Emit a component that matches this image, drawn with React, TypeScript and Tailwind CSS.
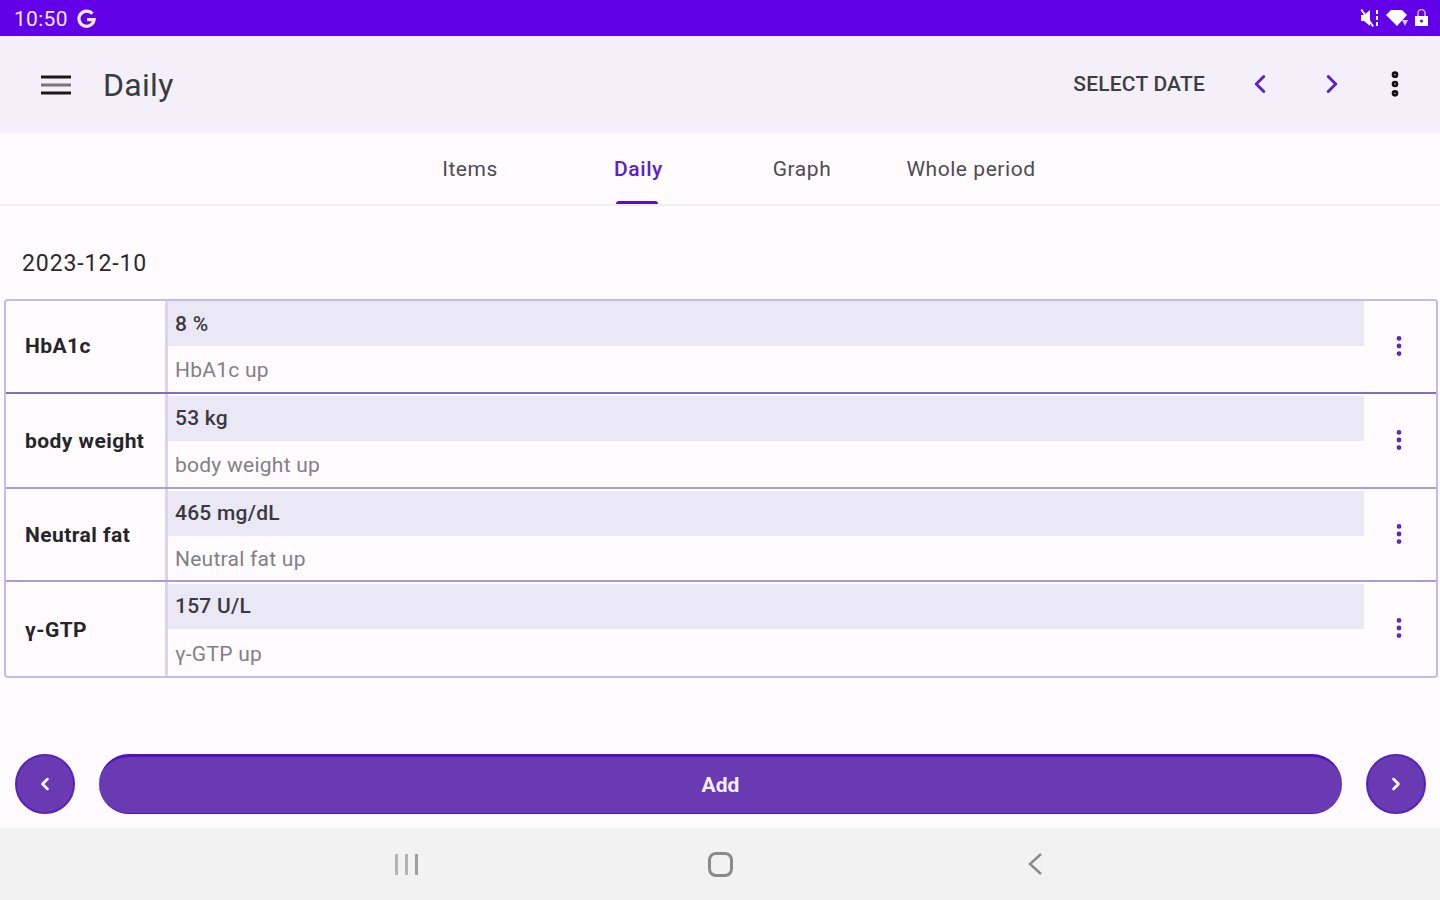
import { ChevronLeft, ChevronRight, EllipsisVertical } from "lucide-react";

const rows = [
  { name: "HbA1c", value: "8 %", note: "HbA1c up", rowClass: "h-[93px]", border: "border-b-2 border-[#7e6fc6]", top: "", barPad: "pt-[2px]" },
  { name: "body weight", value: "53 kg", note: "body weight up", rowClass: "h-[95px]", border: "border-b-2 border-[#a79dd9]", top: "pt-[2px]", barPad: "" },
  { name: "Neutral fat", value: "465 mg/dL", note: "Neutral fat up", rowClass: "h-[93px]", border: "border-b-2 border-[#a79dd9]", top: "pt-[2px]", barPad: "" },
  { name: "γ-GTP", value: "157 U/L", note: "γ-GTP up", rowClass: "h-[94px]", border: "", top: "pt-[2px]", barPad: "" },
];

const tabs = [
  { label: "Items", width: "w-[170px]" },
  { label: "Daily", width: "w-[167px]", active: true },
  { label: "Graph", width: "w-[160px]" },
  { label: "Whole period", width: "w-[178px]" },
];

function StatusIcons() {
  return (
    <div className="flex items-center gap-[5px] text-white">
      <svg width="21" height="20" viewBox="0 0 21 20" fill="currentColor">
        <path d="M1 7h3l6-5v16l-6-5H1z" />
        <path d="M2 1l12 17-1.500 1L0.500 2z" />
        <rect x="16" y="2" width="2" height="4" />
        <rect x="16" y="8" width="2" height="4" />
        <rect x="16" y="14" width="2" height="4" />
      </svg>
      <svg width="23" height="18" viewBox="0 0 23 18" fill="currentColor">
        <path d="M0 6 5 1h11l5 5-10 11z" />
        <path d="M16 11h6l-3 6z" fill="#d9c7fb" />
      </svg>
      <svg width="15" height="18" viewBox="0 0 15 18" fill="currentColor">
        <path d="M1 7h13v10H1z" />
        <path d="M4 7V4a3.500 3.500 0 0 1 7 0v3" fill="none" stroke="#c9b0f7" strokeWidth="1.500" />
        <circle cx="7.500" cy="12" r="1.500" fill="#6200e8" />
      </svg>
    </div>
  );
}

function StatusBar() {
  return (
    <div className="flex h-[36px] items-center justify-between bg-[#6200e8] pl-[14px] pr-[11px] text-white">
      <div className="flex items-center gap-[9px]">
        <span className="pt-[2px] text-[21px] leading-none tracking-[0.3px] text-[#efe6fd]">10:50</span>
        <svg width="19" height="19" viewBox="0 0 20 20" fill="none" stroke="#efe6fd" strokeWidth="3.400">
          <path d="M16.200 5A8 8 0 1 0 18 11.200H10.500" />
        </svg>
      </div>
      <StatusIcons />
    </div>
  );
}

function AppBar() {
  return (
    <div className="flex h-[97px] items-center bg-[#f3f0f9] text-[#1c1b1f]">
      <svg className="ml-[41px]" width="30" height="22" viewBox="0 0 30 22" fill="none" strokeWidth="3">
        <path d="M0 3h30" stroke="#1a1a1a" />
        <path d="M0 11h30" stroke="#77767c" />
        <path d="M0 19h30" stroke="#1a1a1a" />
      </svg>
      <h1 className="ml-[32px] text-[32px] leading-none tracking-[0.3px] text-[#3a3a3f]">Daily</h1>
      <button className="ml-auto text-[21px] font-medium leading-none tracking-[0.2px] text-[#3f3d44]">SELECT DATE</button>
      <ChevronLeft className="ml-[40px] -mt-[2px] h-[30px] w-[30px] text-[#5a22c8]" strokeWidth={2.400} />
      <ChevronRight className="ml-[42px] -mt-[2px] h-[30px] w-[30px] text-[#5a22c8]" strokeWidth={2.400} />
      <EllipsisVertical className="ml-[32px] mr-[29px] -mt-[2px] h-[32px] w-[32px] text-[#111111]" strokeWidth={3} />
    </div>
  );
}

function Tabs() {
  return (
    <div className="flex h-[73px] justify-center border-b-2 border-[#f0f0f2] bg-[#fffbff] pl-[5px]">
      {tabs.map((tab) => (
        <div key={tab.label} className={`relative flex ${tab.width} items-start justify-center pt-[23px]`}>
          <span className={`text-[21px] leading-[26px] tracking-[0.55px] ${tab.active ? "font-medium text-[#5a22c8]" : "text-[#4d4c52]"}`}>
            {tab.label}
          </span>
          {tab.active ? <span className="absolute bottom-0 -ml-[3px] h-[3px] w-[42px] rounded-t bg-[#5a10d0]" /> : null}
        </div>
      ))}
    </div>
  );
}

function ItemTable() {
  return (
    <div className="ml-[4px] mr-[2px] overflow-hidden rounded-[4px] border-2 border-[#c3bce6]">
      {rows.map((row) => (
        <div key={row.name} className={`flex ${row.rowClass} ${row.border}`}>
          <div className={`flex w-[162px] shrink-0 items-center border-r-[3px] border-[#d9d5ef] pl-[19px] ${row.top}`}>
            <span className="text-[21px] font-bold leading-none tracking-[0.45px] text-[#26252a]">{row.name}</span>
          </div>
          <div className={`flex min-w-0 flex-1 flex-col ${row.top}`}>
            <div className={`flex h-[45px] items-center bg-[#ebe8f6] pl-[7px] ${row.barPad}`}>
              <span className="text-[21px] font-medium leading-none tracking-[0.25px] text-[#3a393f]">{row.value}</span>
            </div>
            <div className="flex flex-1 items-center pl-[7px] pt-[3px]">
              <span className="text-[21px] leading-none tracking-[0.25px] text-[#818085]">{row.note}</span>
            </div>
          </div>
          <div className="flex w-[72px] shrink-0 items-center justify-center pb-[2px] pr-[2px]">
            <EllipsisVertical className="h-[26px] w-[26px] text-[#5a22c8]" strokeWidth={2.400} />
          </div>
        </div>
      ))}
    </div>
  );
}

function BottomActions() {
  return (
    <div className="mt-auto flex items-center gap-[24px] pl-[15px] pr-[14px] pb-[14px]">
      <button className="flex h-[60px] w-[60px] items-center justify-center rounded-full border-2 border-[#5a22b8] bg-[#6a3ab2] text-white">
        <ChevronLeft className="h-[20px] w-[20px]" strokeWidth={3} />
      </button>
      <button className="h-[60px] flex-1 rounded-full border-t-[3px] border-b-[1px] border-[#5310c2] bg-[#6a3ab2] pt-[1px] text-[21px] font-bold text-[#f3effa]">
        Add
      </button>
      <button className="flex h-[60px] w-[60px] items-center justify-center rounded-full border-2 border-[#5a22b8] bg-[#6a3ab2] text-white">
        <ChevronRight className="h-[20px] w-[20px]" strokeWidth={3} />
      </button>
    </div>
  );
}

function NavBar() {
  return (
    <div className="grid h-[72px] grid-cols-3 items-center bg-[#f2f2f2] px-[248px]">
      <div className="flex justify-center gap-[7px] pl-[2px]">
        <span className="h-[21px] w-[3px] bg-[#b4b4b4]" />
        <span className="h-[21px] w-[3px] bg-[#b4b4b4]" />
        <span className="h-[21px] w-[3px] bg-[#a0a0a0]" />
      </div>
      <div className="flex justify-center pl-[2px]">
        <span className="h-[25px] w-[25px] rounded-[8px] border-[3px] border-[#8a8a8a]" />
      </div>
      <div className="flex justify-center">
        <svg width="16" height="24" viewBox="0 0 16 24" fill="none" stroke="#8a8a8a" strokeWidth="2.400">
          <path d="M14 2 3 12l11 10" />
        </svg>
      </div>
    </div>
  );
}

export default function App() {
  return (
    <div className="flex h-[900px] w-[1440px] flex-col overflow-hidden bg-[#fffbff] font-['Roboto',sans-serif]">
      <StatusBar />
      <AppBar />
      <Tabs />
      <p className="pl-[22px] pt-[45px] pb-[23px] text-[23px] leading-[25px] tracking-[0.9px] text-[#2a292e]">2023-12-10</p>
      <ItemTable />
      <BottomActions />
      <NavBar />
    </div>
  );
}
